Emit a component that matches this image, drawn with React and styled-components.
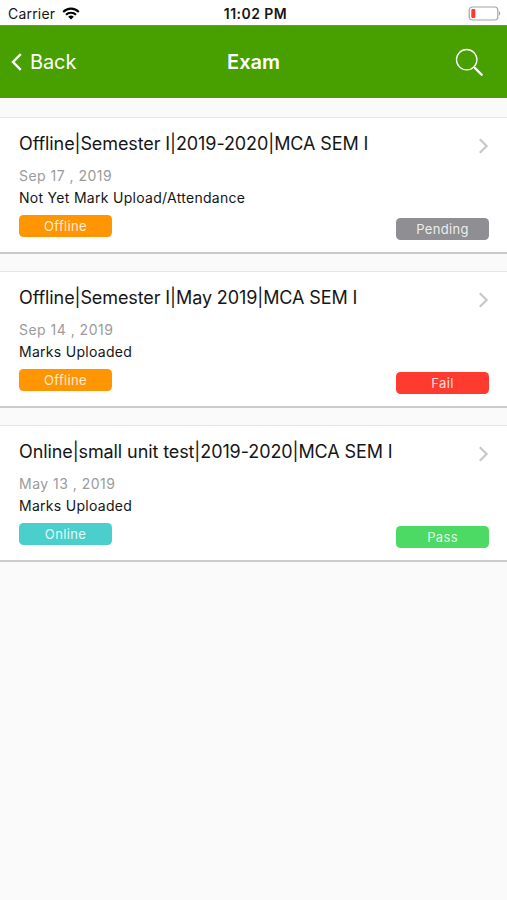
import React from 'react'
import styled, { createGlobalStyle } from 'styled-components'

const colors = {
  header: '#489f00',
  page: '#fafafa',
  text: '#161616',
  muted: '#9b9b9b',
  orange: '#ff9500',
  teal: '#4bcfcc',
  gray: '#8e8e93',
  red: '#ff3b30',
  green: '#4cd964',
}

const GlobalStyle = createGlobalStyle`
  * {
    box-sizing: border-box;
  }

  body {
    margin: 0;
    background: ${colors.page};
    font-family: Inter, 'Liberation Sans', sans-serif;
    color: ${colors.text};
  }
`

const Screen = styled.div`
  min-height: 900px;
  background: ${colors.page};
`

const StatusBar = styled.div`
  display: grid;
  grid-template-columns: 1fr auto 1fr;
  align-items: center;
  height: 25px;
  padding: 2px 6px 0 8px;
  background: #fff;
  font-size: 14px;
  line-height: 23px;
`

const Carrier = styled.div`
  display: flex;
  align-items: center;
  gap: 7px;
  letter-spacing: 0.2px;
`

const Time = styled.div`
  padding: 1px 0 0 2px;
  font-size: 14px;
  font-weight: 600;
  line-height: 22px;
  letter-spacing: 0.45px;
`

const Battery = styled.svg`
  justify-self: end;
`

const Header = styled.header`
  display: grid;
  grid-template-columns: 1fr auto 1fr;
  align-items: center;
  height: 73px;
  padding: 0 23px 0 11px;
  border-top: 1px solid #5aa91c;
  background: ${colors.header};
  color: #fff;
`

const BackButton = styled.button`
  display: flex;
  align-items: center;
  gap: 8px;
  padding: 0;
  border: 0;
  background: none;
  color: inherit;
  font: inherit;
  font-size: 20px;
  line-height: 24px;
  letter-spacing: -0.1px;
`

const Title = styled.h1`
  margin: 0 0 0 12px;
  font-size: 20px;
  font-weight: 600;
  line-height: 24px;
`

const SearchButton = styled.button`
  display: flex;
  justify-self: end;
  padding: 1px 0 0;
  border: 0;
  background: none;
  color: inherit;
`

const List = styled.main`
  display: flex;
  flex-direction: column;
  gap: 17px;
  padding-top: 19px;
`

const Card = styled.article`
  display: flex;
  justify-content: space-between;
  height: 137px;
  padding: 14px 18px 12px 19px;
  border-top: 1px solid #e6e6e6;
  border-bottom: 2px solid #cbcbcb;
  background: #fff;
`

const Side = styled.div`
  display: flex;
  flex-direction: column;
  align-items: flex-end;
  justify-content: space-between;
  padding-top: 6px;
`

const ExamName = styled.h2`
  margin: 0 0 8.5px;
  font-size: 18px;
  font-weight: 400;
  line-height: 24px;
  letter-spacing: -0.1px;
  white-space: nowrap;
`

const ExamDate = styled.p`
  margin: 0;
  color: ${colors.muted};
  font-size: 14px;
  line-height: 22px;
  letter-spacing: 0.48px;
`

const ExamStatus = styled.p`
  margin: 0 0 6px;
  font-size: 14px;
  line-height: 22px;
  letter-spacing: 0.29px;
`

const Badge = styled.span`
  display: block;
  width: 93px;
  height: 22px;
  border-radius: 4.5px;
  background: ${({ $color }) => $color};
  color: rgba(255, 255, 255, 0.86);
  font-size: 13px;
  line-height: 22px;
  letter-spacing: 0.35px;
  text-align: center;
`

const exams = [
  {
    name: 'Offline|Semester I|2019-2020|MCA SEM I',
    date: 'Sep 17 , 2019',
    status: 'Not Yet Mark Upload/Attendance',
    mode: 'Offline',
    modeColor: colors.orange,
    result: 'Pending',
    resultColor: colors.gray,
  },
  {
    name: 'Offline|Semester I|May 2019|MCA SEM I',
    date: 'Sep 14 , 2019',
    status: 'Marks Uploaded',
    mode: 'Offline',
    modeColor: colors.orange,
    result: 'Fail',
    resultColor: colors.red,
  },
  {
    name: 'Online|small unit test|2019-2020|MCA SEM I',
    date: 'May 13 , 2019',
    status: 'Marks Uploaded',
    mode: 'Online',
    modeColor: colors.teal,
    result: 'Pass',
    resultColor: colors.green,
  },
]

const WifiIcon = () => (
  <svg width="18" height="13" viewBox="0 0 18 13" fill="none" stroke="#000" strokeWidth="2.1">
    <path d="M1.2 4.9a11 11 0 0 1 15.6 0" />
    <path d="M4 7.8a7.1 7.1 0 0 1 10 0" />
    <path d="M9 12.6 6.2 9.8a4 4 0 0 1 5.6 0Z" fill="#000" stroke="none" />
  </svg>
)

const BatteryIcon = () => (
  <Battery width="33" height="15" viewBox="0 0 33 15" fill="none">
    <rect x="1.2" y="1" width="28.6" height="13" rx="3.2" stroke="#a3a3a3" strokeWidth="1.2" />
    <rect x="3.3" y="3" width="4" height="9" rx="1" fill="#ff3b30" />
    <path d="M31 5.3c1.6.6 1.6 3.8 0 4.4Z" fill="#a3a3a3" />
  </Battery>
)

const BackIcon = () => (
  <svg width="11" height="18" viewBox="0 0 11 18" fill="none" stroke="currentColor" strokeWidth="2.4">
    <path d="M9.8 1.2 2 9l7.8 7.8" />
  </svg>
)

const SearchIcon = () => (
  <svg width="29" height="29" viewBox="0 0 29 29" fill="none" stroke="currentColor">
    <circle cx="11.7" cy="11.7" r="10.2" strokeWidth="1.3" />
    <path d="m18.9 19 1.6 1.6" strokeWidth="1.4" />
    <path d="m20 20.1 6.7 6.7" strokeWidth="2.3" strokeLinecap="round" />
  </svg>
)

const ChevronIcon = () => (
  <svg width="11" height="16" viewBox="0 0 11 16" fill="none" stroke="#c7c7cc" strokeWidth="2.2">
    <path d="M1.8 1.2 8.6 8l-6.8 6.8" />
  </svg>
)

const ExamCard = ({ exam }) => (
  <Card>
    <div>
      <ExamName>{exam.name}</ExamName>
      <ExamDate>{exam.date}</ExamDate>
      <ExamStatus>{exam.status}</ExamStatus>
      <Badge $color={exam.modeColor}>{exam.mode}</Badge>
    </div>
    <Side>
      <ChevronIcon />
      <Badge $color={exam.resultColor}>{exam.result}</Badge>
    </Side>
  </Card>
)

const App = () => (
  <Screen>
    <GlobalStyle />
    <StatusBar>
      <Carrier>
        Carrier
        <WifiIcon />
      </Carrier>
      <Time>11:02 PM</Time>
      <BatteryIcon />
    </StatusBar>
    <Header>
      <BackButton>
        <BackIcon />
        Back
      </BackButton>
      <Title>Exam</Title>
      <SearchButton aria-label="Search">
        <SearchIcon />
      </SearchButton>
    </Header>
    <List>
      {exams.map(exam => (
        <ExamCard key={exam.name} exam={exam} />
      ))}
    </List>
  </Screen>
)

export default App
